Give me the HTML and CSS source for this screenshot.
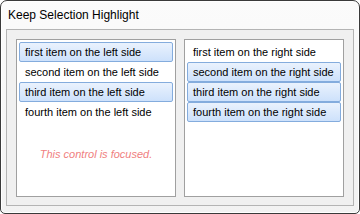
FILE: index.html
```html
<!DOCTYPE html>
<html>
<head>
<meta charset="utf-8">
<link rel="stylesheet" href="styles.css">
</head>
<body>
<div class="window">
  <div class="titlebar">Keep Selection Highlight</div>
  <div class="client">
    <div class="listbox">
      <div class="item sel">first item on the left side</div>
      <div class="item">second item on the left side</div>
      <div class="item sel">third item on the left side</div>
      <div class="item">fourth item on the left side</div>
      <div class="focus-note">This control is focused.</div>
    </div>
    <div class="listbox">
      <div class="item">first item on the right side</div>
      <div class="item sel">second item on the right side</div>
      <div class="item sel">third item on the right side</div>
      <div class="item sel">fourth item on the right side</div>
    </div>
  </div>
</div>
</body>
</html>
```

FILE: styles.css
```css
html, body {
  margin: 0;
  padding: 0;
  background: #ffffff;
}
body {
  font-family: "Liberation Sans", Arial, sans-serif;
  font-size: 11px;
  color: #000;
}
.window {
  box-sizing: border-box;
  width: 360px;
  height: 214px;
  margin: 0;
  border: 1px solid #3a3a3a;
  border-radius: 7px 7px 5px 5px;
  background: linear-gradient(#fbfbfb, #f2f2f2);
  box-shadow: inset 0 0 0 1px #ffffff;
  display: flex;
  flex-direction: column;
  padding: 0 5px 7px 5px;
}
.titlebar {
  height: 28px;
  line-height: 28px;
  padding-left: 2px;
  font-size: 12px;
  color: #000;
}
.client {
  flex: 1;
  border: 1px solid #b4b4b4;
  background: #f0f0f0;
  padding: 9px 8px 6px 9px;
  display: flex;
  gap: 8px;
}
.listbox {
  box-sizing: border-box;
  width: 160px;
  height: 158px;
  border: 1px solid #a0a0a0;
  background: #ffffff;
  padding: 2px 2px;
}
.item {
  height: 18px;
  line-height: 18px;
  border: 1px solid transparent;
  border-radius: 2px;
  padding: 0 5px;
  white-space: nowrap;
}
.item.sel {
  border-color: #84acdd;
  background: linear-gradient(#eaf2fd, #cde1fb);
}
.focus-note {
  margin-top: 24px;
  line-height: 16px;
  text-align: center;
  font-style: italic;
  color: #f08080;
}
```
